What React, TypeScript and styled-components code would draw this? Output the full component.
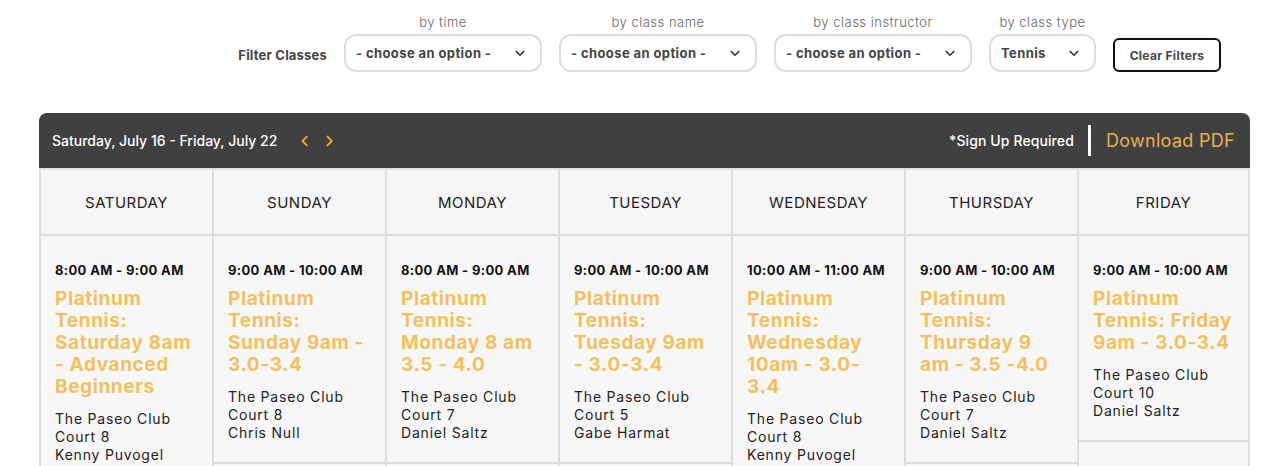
import React from "react";
import styled, { createGlobalStyle } from "styled-components";

const GlobalStyle = createGlobalStyle`
  body {
    margin: 0;
    background: #ffffff;
    font-family: Inter, "Noto Sans", sans-serif;
    color: #222;
  }
`;

const Page = styled.div`
  width: 1274px;
  padding-top: 13px;
`;

const FilterBar = styled.div`
  display: flex;
  justify-content: flex-end;
  align-items: flex-end;
  gap: 17px;
  padding-right: 53px;
`;

const FilterTitle = styled.span`
  font-size: 13px;
  font-weight: 700;
  color: #444;
  letter-spacing: 0.2px;
  padding-bottom: 9px;
`;

const FilterGroup = styled.div`
  display: flex;
  flex-direction: column;
  align-items: center;
  gap: 3px;
`;

const FilterLabel = styled.span`
  font-size: 13px;
  line-height: 18px;
  color: #666;
  font-weight: 300;
  letter-spacing: 0.5px;
`;

const Select = styled.div<{ $width: number }>`
  width: ${(p) => p.$width}px;
  height: 38px;
  box-sizing: border-box;
  border: 2px solid #dddddd;
  border-radius: 12px;
  display: flex;
  align-items: center;
  justify-content: space-between;
  padding: 0 14px 0 10px;
  font-size: 13px;
  font-weight: 700;
  letter-spacing: 0.4px;
  color: #444;
`;

const ClearButton = styled.button`
  width: 108px;
  height: 34px;
  box-sizing: border-box;
  border: 2px solid #111;
  border-radius: 6px;
  background: #fff;
  font-family: inherit;
  font-size: 12px;
  font-weight: 700;
  letter-spacing: 0.3px;
  color: #444;
`;

const Schedule = styled.div`
  margin: 41px 0 0 39px;
  width: 1211px;
`;

const TopBar = styled.div`
  height: 55px;
  background: #404040;
  border-radius: 8px 8px 0 0;
  display: flex;
  align-items: center;
  padding: 0 15px 0 13px;
`;

const Range = styled.span`
  color: #fff;
  font-size: 14px;
  font-weight: 500;
`;

const Arrows = styled.div`
  display: flex;
  gap: 10px;
  margin-left: 22px;
`;

const Spacer = styled.div`
  flex: 1;
`;

const Notice = styled.span`
  color: #fff;
  font-size: 14px;
  font-weight: 500;
  letter-spacing: 0.1px;
`;

const Divider = styled.span`
  width: 3px;
  height: 31px;
  background: #fff;
  margin: 0 15px 0 14px;
`;

const Download = styled.a`
  color: #eab24a;
  font-size: 18px;
  font-weight: 400;
  letter-spacing: 0.3px;
`;

const Grid = styled.div`
  display: grid;
  grid-template-columns: repeat(7, 1fr);
`;

const Column = styled.div<{ $last: boolean }>`
  display: flex;
  flex-direction: column;
  border-left: 2px solid #dddddd;
  border-right: ${(p) => (p.$last ? "2px solid #dddddd" : "none")};
`;

const DayHead = styled.div`
  height: 64px;
  border-top: 2px solid #e2e2e2;
  border-bottom: 2px solid #dddddd;
  background: #f6f6f6;
  display: flex;
  align-items: center;
  justify-content: center;
  font-size: 15px;
  letter-spacing: 0.5px;
  color: #222;
`;

const Card = styled.div`
  background: #f7f7f7;
  border-bottom: 2px solid #dddddd;
  padding: 25px 14px 20px 14px;
`;

const Time = styled.div`
  font-size: 13px;
  font-weight: 700;
  letter-spacing: 0.35px;
  color: #111;
  line-height: 18px;
`;

const Title = styled.div`
  margin-top: 9px;
  font-size: 19px;
  line-height: 22px;
  font-weight: 700;
  letter-spacing: 0.6px;
  color: #f2c15e;
`;

const Details = styled.div`
  margin-top: 12px;
  font-size: 14px;
  line-height: 18px;
  letter-spacing: 0.8px;
  color: #222;
`;

const EmptyCard = styled.div`
  background: #f7f7f7;
  height: 120px;
`;

const Chevron = ({ dir, color, size }: { dir: "left" | "right" | "down"; color: string; size: number }) => {
  const d =
    dir === "left" ? "M9 3 L4 8 L9 13" : dir === "right" ? "M5 3 L10 8 L5 13" : "M3 6 L8 11 L13 6";
  return (
    <svg width={size} height={size} viewBox="0 0 16 16" fill="none">
      <path d={d} stroke={color} strokeWidth={2.2} strokeLinecap="round" strokeLinejoin="round" />
    </svg>
  );
};

const filters = [
  { label: "by time", value: "- choose an option -", width: 198 },
  { label: "by class name", value: "- choose an option -", width: 198 },
  { label: "by class instructor", value: "- choose an option -", width: 198 },
  { label: "by class type", value: "Tennis", width: 107 },
];

const days = [
  {
    day: "SATURDAY",
    time: "8:00 AM - 9:00 AM",
    title: "Platinum Tennis: Saturday 8am - Advanced Beginners",
    court: "Court 8",
    coach: "Kenny Puvogel",
  },
  {
    day: "SUNDAY",
    time: "9:00 AM - 10:00 AM",
    title: "Platinum Tennis: Sunday 9am - 3.0-3.4",
    court: "Court 8",
    coach: "Chris Null",
  },
  {
    day: "MONDAY",
    time: "8:00 AM - 9:00 AM",
    title: "Platinum Tennis: Monday 8 am 3.5 - 4.0",
    court: "Court 7",
    coach: "Daniel Saltz",
  },
  {
    day: "TUESDAY",
    time: "9:00 AM - 10:00 AM",
    title: "Platinum Tennis: Tuesday 9am - 3.0-3.4",
    court: "Court 5",
    coach: "Gabe Harmat",
  },
  {
    day: "WEDNESDAY",
    time: "10:00 AM - 11:00 AM",
    title: "Platinum Tennis: Wednesday 10am - 3.0-3.4",
    court: "Court 8",
    coach: "Kenny Puvogel",
  },
  {
    day: "THURSDAY",
    time: "9:00 AM - 10:00 AM",
    title: "Platinum Tennis: Thursday 9 am - 3.5 -4.0",
    court: "Court 7",
    coach: "Daniel Saltz",
  },
  {
    day: "FRIDAY",
    time: "9:00 AM - 10:00 AM",
    title: "Platinum Tennis: Friday 9am - 3.0-3.4",
    court: "Court 10",
    coach: "Daniel Saltz",
  },
];

export default function App() {
  return (
    <Page>
      <GlobalStyle />
      <FilterBar>
        <FilterTitle>Filter Classes</FilterTitle>
        {filters.map((f) => (
          <FilterGroup key={f.label}>
            <FilterLabel>{f.label}</FilterLabel>
            <Select $width={f.width}>
              <span>{f.value}</span>
              <Chevron dir="down" color="#333" size={12} />
            </Select>
          </FilterGroup>
        ))}
        <ClearButton>Clear Filters</ClearButton>
      </FilterBar>

      <Schedule>
        <TopBar>
          <Range>Saturday, July 16 - Friday, July 22</Range>
          <Arrows>
            <Chevron dir="left" color="#f0aa32" size={14} />
            <Chevron dir="right" color="#f0aa32" size={14} />
          </Arrows>
          <Spacer />
          <Notice>*Sign Up Required</Notice>
          <Divider />
          <Download>Download PDF</Download>
        </TopBar>
        <Grid>
          {days.map((d, i) => (
            <Column key={d.day} $last={i === days.length - 1}>
              <DayHead>{d.day}</DayHead>
              <Card>
                <Time>{d.time}</Time>
                <Title>{d.title}</Title>
                <Details>
                  The Paseo Club
                  <br />
                  {d.court}
                  <br />
                  {d.coach}
                </Details>
              </Card>
              <EmptyCard />
            </Column>
          ))}
        </Grid>
      </Schedule>
    </Page>
  );
}
